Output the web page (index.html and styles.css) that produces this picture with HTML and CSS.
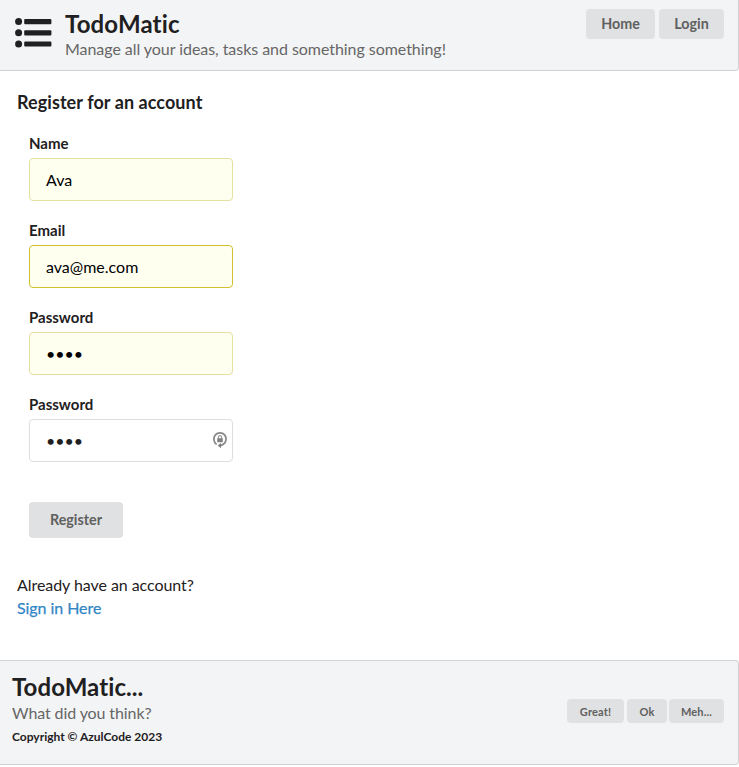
FILE: index.html
```html
<!DOCTYPE html>
<html lang="en">
<head>
<meta charset="utf-8">
<title>TodoMatic</title>
<link rel="stylesheet" href="styles.css">
</head>
<body>
<header class="bar top-bar">
  <svg class="logo" viewBox="0 0 37 30" width="37" height="30">
    <circle cx="3.6" cy="3.6" r="3.5"/><circle cx="3.6" cy="14.8" r="3.5"/><circle cx="3.6" cy="26" r="3.5"/>
    <rect x="9.2" y="1" width="27.2" height="5.2" rx="1"/><rect x="9.2" y="12.2" width="27.2" height="5.2" rx="1"/><rect x="9.2" y="23.4" width="27.2" height="5.2" rx="1"/>
  </svg>
  <div class="brand">
    <h1 class="title">TodoMatic</h1>
    <p class="subtitle">Manage all your ideas, tasks and something something!</p>
  </div>
  <nav class="nav">
    <button class="button nav-home">Home</button>
    <button class="button nav-login">Login</button>
  </nav>
</header>
<main class="content">
  <h2 class="heading">Register for an account</h2>
  <form class="form">
    <div class="field"><label class="label" for="name">Name</label><input class="input filled" id="name" type="text" value="Ava"></div>
    <div class="field"><label class="label" for="email">Email</label><input class="input filled active" id="email" type="text" value="ava@me.com"></div>
    <div class="field"><label class="label" for="pw">Password</label><input class="input filled" id="pw" type="password" value="1234"></div>
    <div class="field"><label class="label" for="pw2">Password</label><input class="input" id="pw2" type="password" value="1234">
      <svg class="key" viewBox="0 0 16 18" width="16" height="18">
        <path d="M4.6 13.4C1.2 11.2 1.3 6.3 3.4 3.9C5.6 1.2 10.4 1.2 12.6 3.9C14.8 6.5 14.6 11.6 11.2 13.4L8.5 14.6" fill="none" stroke="#8a8a8a" stroke-width="1.8"/>
        <path d="M9 12.1v5.2L5.6 14.6z" fill="#808080"/>
        <path d="M6.4 8V6.2a1.6 1.6 0 0 1 3.2 0V8" fill="none" stroke="#999" stroke-width="1.1"/>
        <rect x="5.2" y="7.2" width="5.6" height="4" rx=".4" fill="#808080"/>
      </svg>
    </div>
    <button class="button register" type="button">Register</button>
  </form>
  <p class="account">Already have an account?<br><a class="link" href="#">Sign in Here</a></p>
</main>
<footer class="bar bottom-bar">
  <div class="brand">
    <h2 class="title">TodoMatic...</h2>
    <p class="subtitle">What did you think?</p>
    <p class="copyright">Copyright © AzulCode 2023</p>
  </div>
  <div class="votes">
    <button class="button great">Great!</button>
    <button class="button ok">Ok</button>
    <button class="button meh">Meh...</button>
  </div>
</footer>
</body>
</html>
```
FILE: styles.css
```css
* { box-sizing: border-box; }
body { margin: 0; background: #fff; color: #1f2021; font: 16px/23px Lato, sans-serif; font-variant-ligatures: none; }
h1, h2, p { margin: 0; }
.bar { display: flex; background: #f3f4f5; border: 1px solid #d1d2d3; border-left: 0; }
.top-bar { height: 71px; border-top: 0; border-radius: 0 0 4px 0; padding: 9px 14px 0 15px; }
.logo { margin: 9px 13px 0 0; fill: #1f2021; }
.title { font-size: 24px; line-height: 30px; font-weight: 700; letter-spacing: .15px; }
.subtitle { color: #666; font-size: 16px; line-height: 20px; letter-spacing: -.05px; }
.nav { display: flex; gap: 4px; margin-left: auto; }
.button { border: 0; border-radius: 4px; padding: 0; background: #e0e1e2; color: #5f6060; font: 700 14.3px/1 Lato, sans-serif; }
.nav-home { width: 69px; height: 30px; }
.nav-login { width: 65px; height: 30px; }
.content { height: 589px; padding: 19px 17px 0; }
.heading { font-size: 18px; line-height: 25px; font-weight: 700; letter-spacing: .07px; }
.form { padding: 18px 0 0 12px; }
.field { position: relative; width: 204px; height: 87px; }
.label { display: block; height: 25px; font-size: 15px; line-height: 20px; font-weight: 700; }
.input { display: block; width: 204px; height: 43px; padding: 0 16px; border: 1px solid #dedede; border-radius: 4px; background: #fff; color: #1f2021; font: 16px/20px Lato, sans-serif; outline: 0; }
.filled { background: #fffff0; border-color: #e5dfa1; color: #000; }
.active { border-color: #d4bf31; }
.key { position: absolute; left: 183px; top: 37px; }
.register { display: block; width: 94px; height: 36px; margin-top: 21px; }
.account { margin-top: 35px; letter-spacing: -.06px; }
.link { color: #3187c4; text-decoration: none; -webkit-text-stroke: .25px #3187c4; }
.bottom-bar { height: 105px; border-radius: 0 4px 4px 0; padding: 11px 14px 0 12px; }
.bottom-bar .title { letter-spacing: .08px; }
.bottom-bar .subtitle { line-height: 22px; letter-spacing: -.1px; }
.copyright { font-size: 12px; font-weight: 700; line-height: 24px; padding-top: 1px; }
.votes { display: flex; margin: 27px 0 0 auto; }
.votes .button { height: 24px; font-size: 11px; letter-spacing: .15px; }
.votes .great { width: 57px; margin-right: 3px; }
.votes .ok { width: 40px; margin-right: 2px; }
.votes .meh { width: 55px; }
```
